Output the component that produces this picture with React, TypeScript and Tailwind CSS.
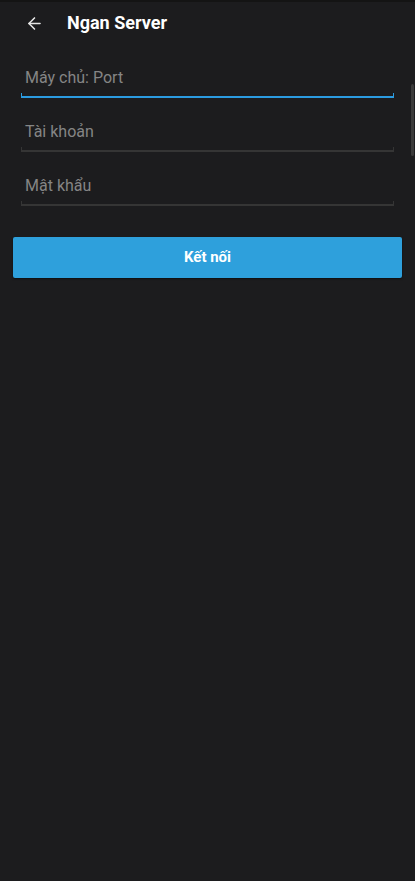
import { ArrowLeft } from "lucide-react";

const fields = [
  { label: "Máy chủ: Port", active: true },
  { label: "Tài khoản", active: false },
  { label: "Mật khẩu", active: false },
];

export default function App() {
  return (
    <div className="relative min-h-[881px] w-full bg-[#1c1c1e] font-['Roboto',sans-serif] text-white">
      <div className="h-[2px] bg-[#141414]" />
      {/* Header */}
      <div className="flex h-[42px] items-center pl-[25px]">
        <ArrowLeft className="h-[19px] w-[19px] text-[#e6e6e6]" strokeWidth={2} />
        <h1 className="ml-[23px] text-[18px] font-bold leading-none text-white">Ngan Server</h1>
      </div>

      {/* Fields */}
      <div className="mt-[24px] flex flex-col gap-[24px] px-[21px]">
        {fields.map((f) => (
          <div key={f.label}>
            <div className="pl-[4px] text-[16px] leading-[20px] text-[#858585]">{f.label}</div>
            <div
              className={
                f.active
                  ? "mt-[5px] h-[5px] border-x border-b-2 border-[#2b9be0]"
                  : "mt-[5px] h-[5px] border-x border-b-2 border-[#353535]"
              }
            />
          </div>
        ))}
      </div>

      {/* Button */}
      <div className="mt-[31px] px-[13px]">
        <button className="flex h-[41px] w-full items-center justify-center rounded-[2px] bg-[#2ea0dc] text-[15px] font-bold text-white shadow-[0_1px_2px_rgba(0,0,0,0.5)]">
          Kết nối
        </button>
      </div>

      {/* Scrollbar */}
      <div className="absolute right-[1px] top-[84px] h-[72px] w-[3px] rounded-full bg-[#3a3a3a]" />
    </div>
  );
}
